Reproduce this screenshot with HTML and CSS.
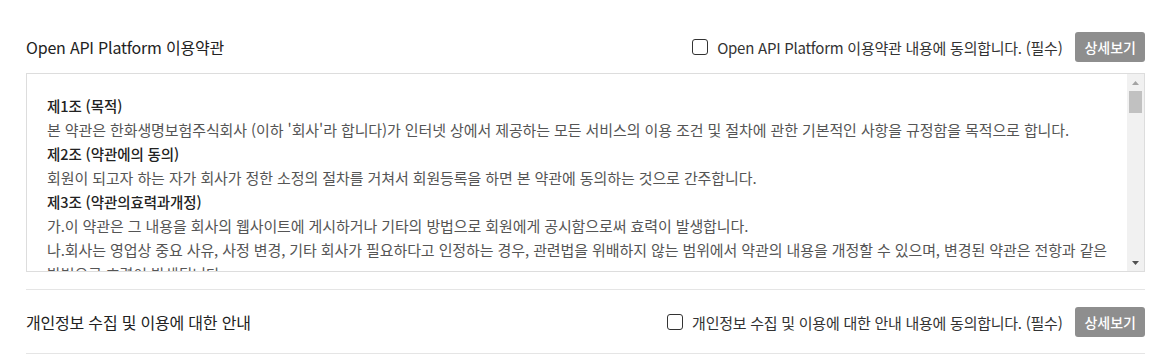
FILE: index.html
```html
<!DOCTYPE html>
<html lang="ko">
<head>
    <meta charset="UTF-8">
    <meta name="viewport" content="width=device-width, initial-scale=1.0">
    <title>약관 동의</title>
    <link rel="stylesheet" href="styles.css">
</head>
<body>
    <div class="agree-wrap">
        <div class="agree-section">
            <div class="agree-head">
                <h3>Open API Platform 이용약관</h3>
                <div class="agree-check">
                    <label><input type="checkbox" id="chk-terms"> Open API Platform 이용약관 내용에 동의합니다. (필수)</label>
                    <button type="button">상세보기</button>
                </div>
            </div>
            <div class="terms-box">
                <div class="terms-body" id="terms-body">
                    <p class="tit">제1조 (목적)</p>
                    <p>본 약관은 한화생명보험주식회사 (이하 '회사'라 합니다)가 인터넷 상에서 제공하는 모든 서비스의 이용 조건 및 절차에 관한 기본적인 사항을 규정함을 목적으로 합니다.</p>
                    <p class="tit">제2조 (약관에의 동의)</p>
                    <p>회원이 되고자 하는 자가 회사가 정한 소정의 절차를 거쳐서 회원등록을 하면 본 약관에 동의하는 것으로 간주합니다.</p>
                    <p class="tit">제3조 (약관의효력과개정)</p>
                    <p>가.이 약관은 그 내용을 회사의 웹사이트에 게시하거나 기타의 방법으로 회원에게 공시함으로써 효력이 발생합니다.</p>
                    <p>나.회사는 영업상 중요 사유, 사정 변경, 기타 회사가 필요하다고 인정하는 경우, 관련법을 위배하지 않는 범위에서 약관의 내용을 개정할 수 있으며, 변경된 약관은 전항과 같은 방법으로 효력이 발생됩니다.</p>
                    <p>다.회원은 변경된 약관에 동의하지 않을 경우 회원 탈퇴를 요청할 수 있으며, 변경된 약관의 효력 발생일 이후에도 서비스를 계속 사용할 경우 약관의 변경 사항에 동의한 것으로 간주됩니다.</p>
                    <p class="tit">제4조 (약관 외 준칙)</p>
                    <p>본 약관에 명시되지 않은 사항은 전기통신기본법, 전기통신사업법, 정보통신망 이용촉진 및 정보보호 등에 관한 법률 및 기타 관련 법령의 규정에 따릅니다.</p>
                    <p class="tit">제5조 (용어의 정의)</p>
                    <p>가.회원 : 회사와 서비스 이용에 관한 계약을 체결한 자를 말합니다.</p>
                    <p>나.아이디(ID) : 회원의 식별과 서비스 이용을 위하여 회원이 정하고 회사가 승인하는 문자와 숫자의 조합을 말합니다.</p>
                    <p>다.비밀번호 : 회원의 비밀 보호를 위해 회원 자신이 설정한 문자와 숫자의 조합을 말합니다.</p>
                    <p class="tit">제6조 (이용계약의 성립)</p>
                    <p>이용계약은 회원이 본 약관에 동의하고 회사가 정한 가입 양식에 따라 회원정보를 기입한 후 회사가 이를 승낙함으로써 성립합니다.</p>
                </div>
                <div class="scrollbar">
                    <span class="sb-btn">
                        <svg width="7" height="4" viewBox="0 0 7 4"><polygon points="0,4 3.5,0 7,4" fill="#a3a3a3"/></svg>
                    </span>
                    <div class="sb-track"><div class="sb-thumb"></div></div>
                    <span class="sb-btn">
                        <svg width="7" height="4" viewBox="0 0 7 4"><polygon points="0,0 7,0 3.5,4" fill="#505050"/></svg>
                    </span>
                </div>
            </div>
        </div>
        <div class="agree-section">
            <div class="agree-head line">
                <h3>개인정보 수집 및 이용에 대한 안내</h3>
                <div class="agree-check">
                    <label><input type="checkbox" id="chk-privacy"> 개인정보 수집 및 이용에 대한 안내 내용에 동의합니다. (필수)</label>
                    <button type="button">상세보기</button>
                </div>
            </div>
        </div>
    </div>
</body>
</html>
```

FILE: styles.css
```css
body {
    margin: 0;
    background: #fff;
    font-family: "Noto Sans CJK KR", "Noto Sans", sans-serif;
    color: #333;
}
.agree-wrap {
    padding: 0 21px 0 26px;
}
.agree-section:first-child {
    padding-bottom: 17px;
    border-bottom: 1px solid #e5e5e5;
}
.agree-head {
    display: flex;
    justify-content: space-between;
    align-items: center;
    padding: 32px 0 11px;
}
.agree-head.line {
    padding: 17px 0 16px;
    border-bottom: 1px solid #e5e5e5;
}
.agree-head h3 {
    margin: 0;
    font-size: 16px;
    font-weight: 400;
    color: #222;
    letter-spacing: -0.2px;
}
.agree-check {
    display: flex;
    align-items: center;
}
.agree-check label {
    display: flex;
    align-items: center;
    font-size: 15px;
    color: #333;
    letter-spacing: -0.25px;
    cursor: pointer;
}
.agree-check input {
    appearance: none;
    width: 16px;
    height: 16px;
    margin: 0 9px 0 0;
    border: 1.5px solid #333;
    border-radius: 3px;
    background: #fff;
    cursor: pointer;
}
.agree-check input:checked {
    background: #333;
}
.agree-check button {
    margin-left: 13px;
    height: 30px;
    padding: 0 9px;
    border: 0;
    border-radius: 3px;
    background: #8e8e8e;
    color: #fff;
    font-family: inherit;
    font-size: 14px;
    font-weight: 500;
    cursor: pointer;
}
.terms-box {
    display: flex;
    height: 197px;
    border: 1px solid #ddd;
}
.terms-body {
    flex: 1;
    overflow: hidden;
    padding: 20px 10px 0 20px;
    font-size: 15px;
    line-height: 24px;
    letter-spacing: -0.1px;
    word-break: keep-all;
    color: #555;
}
.terms-body p {
    margin: 0;
}
.terms-body .tit {
    font-size: 14.5px;
    font-weight: 500;
    color: #222;
}
.scrollbar {
    width: 17px;
    display: flex;
    flex-direction: column;
    background: #f1f1f1;
}
.sb-btn {
    height: 17px;
    display: flex;
    align-items: center;
    justify-content: center;
}
.sb-track {
    flex: 1;
}
.sb-thumb {
    height: 22px;
    margin: 0 2px;
    background: #c1c1c1;
}
```
